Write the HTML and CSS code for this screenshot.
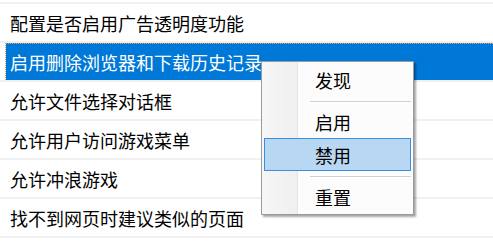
FILE: index.html
```html
<!DOCTYPE html>
<html lang="zh-CN">
<head>
<meta charset="utf-8">
<link rel="stylesheet" href="styles.css">
</head>
<body>
<div class="list">
  <div class="row"><span class="label">配置是否启用广告透明度功能</span></div>
  <div class="row selected"><span class="label">启用删除浏览器和下载历史记录</span></div>
  <div class="row"><span class="label">允许文件选择对话框</span></div>
  <div class="row"><span class="label">允许用户访问游戏菜单</span></div>
  <div class="row"><span class="label">允许冲浪游戏</span></div>
  <div class="row"><span class="label">找不到网页时建议类似的页面</span></div>
</div>
<div class="menu">
  <div class="item">发现</div>
  <div class="sep"></div>
  <div class="item">启用</div>
  <div class="item hover">禁用</div>
  <div class="sep"></div>
  <div class="item">重置</div>
</div>
</body>
</html>
```
FILE: styles.css
```css
html, body {
  margin: 0;
  padding: 0;
  background: #ffffff;
  width: 493px;
  height: 247px;
  overflow: hidden;
  font-family: "Noto Sans CJK SC", "Noto Sans", sans-serif;
}
.list {
  display: flex;
  flex-direction: column;
  padding-top: 2px;
}
.row {
  height: 37px;
  border-top: 2px solid #f0f0f0;
  border-bottom: 2px solid #f0f0f0;
  margin-bottom: -2px;
  display: flex;
  align-items: center;
  font-size: 18px;
  color: #000;
}
.row .label {
  padding-left: 10px;
  white-space: nowrap;
}
.row.selected {
  padding-left: 6px;
  background: linear-gradient(#0078d7, #0078d7) no-repeat 6px 0 / calc(100% - 6px) 100%;
  color: #fff;
  position: relative;
}
.row.selected .label {
  padding-left: 4px;
  align-self: stretch;
  display: flex;
  align-items: center;
  flex: 1;
  border-top: 1px dotted #e0a070;
  border-left: 1px dotted #e0a070;
  margin-left: -1px;
}
.menu {
  position: absolute;
  left: 261px;
  top: 61px;
  width: 149px;
  border: 1px solid #9a9a9a;
  padding: 1px 1px;
  box-shadow: 2px 2px 2px rgba(0, 0, 0, 0.35);
  background: linear-gradient(to right, #f6f6f6 0, #efefef 35px, #e6e6e6 35px, #e6e6e6 36px, #fcfcfc 36px);
  display: flex;
  flex-direction: column;
}
.item {
  height: 33px;
  box-sizing: border-box;
  padding-left: 51px;
  display: flex;
  align-items: center;
  font-size: 18px;
  color: #000;
  margin: 0 1px;
}
.item.hover {
  background: #b8d7f3;
  border: 1px solid #3c8ee2;
  padding-left: 50px;
}
.sep {
  height: 9px;
  box-sizing: border-box;
  padding-top: 5px;
  margin-left: 47px;
  margin-right: 1px;
}
.sep::before {
  content: "";
  display: block;
  height: 1px;
  background: #d0d0d0;
  border-bottom: 1px solid #ffffff;
}
```
